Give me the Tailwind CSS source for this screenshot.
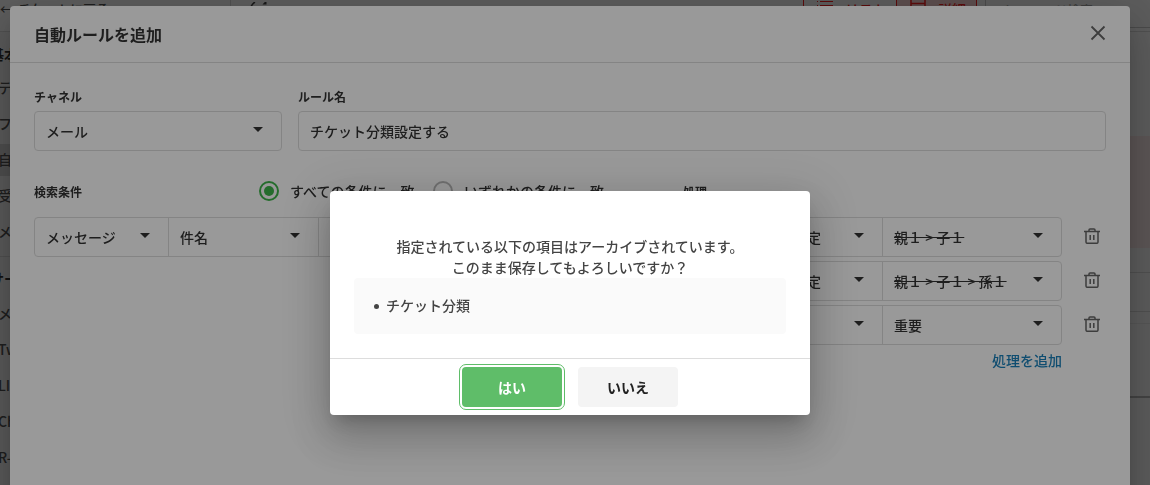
<!DOCTYPE html>
<html lang="ja">
<head>
<meta charset="utf-8">
<title>自動ルールを追加</title>
<script src="https://cdn.jsdelivr.net/npm/@tailwindcss/browser@4"></script>
</head>
<body class="h-screen overflow-hidden bg-white font-['Noto_Sans_CJK_JP',sans-serif] text-sm font-medium text-[#333]">
<svg class="hidden">
  <symbol id="caret" viewBox="0 0 10 5"><path d="M0 0h10L5 5z" fill="#333"/></symbol>
  <symbol id="trash" viewBox="0 0 16 16"><path d="M0 3.500h16M5 3.500V2q0-1 1-1h4q1 0 1 1v1.500M2 3.500v10.500q0 1.300 1.300 1.300h9.400q1.300 0 1.300-1.300V3.500M6.200 7v5M9.800 7v5" fill="none" stroke="currentColor" stroke-width="1.500"/></symbol>
</svg>

<!-- Page behind the dialogs -->
<div class="flex h-full flex-col">
  <header class="flex h-8 shrink-0 items-start border-b border-[#ddd]">
    <a href="#" class="flex h-full w-[231px] items-start overflow-hidden border-r border-[#ddd] text-[13px] leading-[18px] text-[#555]"><span class="w-[18px]">←</span>チケットに戻る</a>
    <button class="ml-4 h-6" aria-label="更新"><svg class="h-5 w-6" viewBox="0 0 24 20" fill="none" stroke="#444" stroke-width="1.500"><path d="M8 0Q3 3 3.500 10a8 8 0 0 0 15 0"/><path d="M15.500 2.500h4V-2z" fill="#444" stroke="none"/></svg></button>
    <div class="ml-auto flex h-7 border-b border-[#ccc] pr-5 leading-[19px]">
      <button class="flex w-[93px] items-start border-l border-[#ff2020] pl-[13px] text-[#ff2020]"><svg class="mr-3 h-4 w-4" viewBox="0 0 16 16" stroke="#ff2020"><path d="M0 1.500h1M3 1.500h13M0 5.500h1M3 5.500h13M0 11.500h1M3 11.500h13"/></svg>リスト</button>
      <button class="flex w-[81px] items-start border-x border-[#ff2020] bg-[#ffd5d5] pl-[13px] text-[#ff2020]"><svg class="mr-3 h-4 w-4" viewBox="0 0 16 16" fill="none" stroke="#ff2020" stroke-width="1.500"><path d="M1 0v14h14V0M1 3.500h14"/></svg>詳細</button>
      <input aria-label="キーワード検索" placeholder="キーワード検索" class="ml-2 h-[19px] w-[145px] border-l border-[#ccc] pl-4 text-[13px] placeholder:text-[#aaa]">
    </div>
  </header>
  <div class="flex min-h-0 grow justify-between">
    <nav class="w-[231px] overflow-hidden bg-[#f7f7f7]">
      <h2 class="-ml-2.5 mt-2 h-8 leading-[28px] font-bold">基本設定</h2>
      <ul class="flex flex-col gap-1 leading-[22px] text-[#555]">
        <li class="h-8 pt-1"><a href="#" class="-ml-0.5">テンプレート</a></li>
        <li class="h-8 pt-1"><a href="#" class="-ml-0.5">フォルダ</a></li>
        <li class="h-8 bg-[#d8d8d8] pt-1"><a href="#" class="-ml-0.5">自動ルール</a></li>
        <li class="h-8 pt-1"><a href="#" class="-ml-0.5">受信設定</a></li>
        <li class="h-8 pt-1"><a href="#" class="-ml-0.5">メンバー</a></li>
      </ul>
      <h2 class="-ml-2.5 mt-2 h-[42px] border-t border-[#ddd] pt-2 leading-[26px] font-bold">サービス</h2>
      <ul class="flex flex-col gap-1 leading-[22px] text-[#555]">
        <li class="h-8 pt-1"><a href="#" class="-ml-0.5">メール</a></li>
        <li class="h-8 pt-1"><a href="#" class="-ml-0.5">Twitter</a></li>
        <li class="h-8 pt-1"><a href="#" class="-ml-0.5">LINE</a></li>
        <li class="h-8 pt-1"><a href="#" class="-ml-0.5">Chat</a></li>
        <li class="h-8 pt-1"><a href="#" class="-ml-0.5">R-Messe</a></li>
      </ul>
    </nav>
    <div class="w-24">
      <div class="h-26"></div>
      <div class="h-28 bg-[#ffecec]"></div>
      <div class="h-[25px] border-b border-[#ddd]"></div>
      <div class="h-[39px] border-b border-[#ddd]"></div>
      <div class="h-3 border-b border-[#eee]"></div>
      <div class="h-[74px] border-b-2 border-[#bbb]"></div>
    </div>
  </div>
</div>

<!-- Rule editor -->
<div class="fixed inset-0 flex overflow-hidden bg-black/40 pt-1.5 pr-5 pl-2.5">
  <section role="dialog" aria-labelledby="rule-title" class="h-[120%] grow rounded-t bg-white shadow-[0_11px_15px_-7px_rgba(0,0,0,0.2),0_24px_38px_3px_rgba(0,0,0,0.14),0_9px_46px_8px_rgba(0,0,0,0.12)]">
    <header class="flex h-[57px] items-center justify-between border-b border-[#ddd] px-6">
      <h1 id="rule-title" class="text-base font-bold">自動ルールを追加</h1>
      <button aria-label="閉じる" class="h-4 w-4"><svg class="-mt-0.5 h-4 w-4" viewBox="0 0 16 16" stroke="#666" stroke-width="1.800"><path d="M1.500 1.500l13 13M14.500 1.500l-13 13"/></svg></button>
    </header>
    <div class="px-6 pt-6">
      <div class="flex gap-4">
        <div class="w-[248px]">
          <label for="channel" class="block h-6 text-xs leading-[20px] font-bold">チャネル</label>
          <div class="relative h-10 rounded border border-[#ddd]">
            <select id="channel" class="h-full w-full appearance-none px-[11px]"><option>メール</option></select>
            <svg class="pointer-events-none absolute top-[15px] right-[18px] h-[5px] w-2.5"><use href="#caret"/></svg>
          </div>
        </div>
        <div class="grow">
          <label for="rulename" class="block h-6 text-xs leading-[20px] font-bold">ルール名</label>
          <input id="rulename" value="チケット分類設定する" class="block h-10 w-full rounded border border-[#ddd] px-[11px]">
        </div>
      </div>
      <div class="mt-6 flex gap-4">
        <div class="grow">
          <div class="flex h-[42px] items-start leading-[32px]">
            <h2 class="w-[225px] text-xs leading-[34px] font-bold">検索条件</h2>
            <label class="flex w-[174px] items-start gap-[11px]"><input type="radio" name="match" checked class="mt-1.5 h-5 w-5 shrink-0 appearance-none rounded-full border-2 border-[#3db54a] bg-[#3db54a] bg-clip-content p-[3px]">すべての条件に一致</label>
            <label class="flex items-start gap-[11px]"><input type="radio" name="match" class="mt-1.5 h-5 w-5 shrink-0 appearance-none rounded-full border-2 border-[#bbb]">いずれかの条件に一致</label>
          </div>
          <div class="flex h-10 rounded border border-[#ddd]">
            <div class="relative w-[134px] border-r border-[#ddd]">
              <select aria-label="対象" class="h-full w-full appearance-none px-[11px]"><option>メッセージ</option></select>
              <svg class="pointer-events-none absolute top-[15px] right-[18px] h-[5px] w-2.5"><use href="#caret"/></svg>
            </div>
            <div class="relative w-[150px] border-r border-[#ddd]">
              <select aria-label="項目" class="h-full w-full appearance-none px-[11px]"><option>件名</option></select>
              <svg class="pointer-events-none absolute top-[15px] right-[18px] h-[5px] w-2.5"><use href="#caret"/></svg>
            </div>
            <input aria-label="値" class="min-w-0 grow px-[11px]">
          </div>
        </div>
        <div class="w-[423px]">
          <h2 class="h-[42px] text-xs leading-[34px] font-bold">処理</h2>
          <div class="flex flex-col gap-1">
            <div class="flex items-center justify-between">
              <div class="flex h-10 w-[379px] rounded border border-[#ddd]">
                <div class="relative w-[199px] border-r border-[#ddd]">
                  <select aria-label="処理1" class="h-full w-full appearance-none px-[11px]"><option>チケット分類を設定</option></select>
                  <svg class="pointer-events-none absolute top-[15px] right-[18px] h-[5px] w-2.5"><use href="#caret"/></svg>
                </div>
                <div class="relative grow">
                  <select aria-label="分類1" class="h-full w-full appearance-none px-[11px] line-through"><option>親１ &gt; 子１</option></select>
                  <svg class="pointer-events-none absolute top-[15px] right-[18px] h-[5px] w-2.5"><use href="#caret"/></svg>
                </div>
              </div>
              <button aria-label="処理1を削除" class="mr-1.5 pb-0.5 text-[#666]"><svg class="h-4 w-4"><use href="#trash"/></svg></button>
            </div>
            <div class="flex items-center justify-between">
              <div class="flex h-10 w-[379px] rounded border border-[#ddd]">
                <div class="relative w-[199px] border-r border-[#ddd]">
                  <select aria-label="処理2" class="h-full w-full appearance-none px-[11px]"><option>チケット分類を設定</option></select>
                  <svg class="pointer-events-none absolute top-[15px] right-[18px] h-[5px] w-2.5"><use href="#caret"/></svg>
                </div>
                <div class="relative grow">
                  <select aria-label="分類2" class="h-full w-full appearance-none px-[11px] line-through"><option>親１ &gt; 子１ &gt; 孫１</option></select>
                  <svg class="pointer-events-none absolute top-[15px] right-[18px] h-[5px] w-2.5"><use href="#caret"/></svg>
                </div>
              </div>
              <button aria-label="処理2を削除" class="mr-1.5 pb-0.5 text-[#666]"><svg class="h-4 w-4"><use href="#trash"/></svg></button>
            </div>
            <div class="flex items-center justify-between">
              <div class="flex h-10 w-[379px] rounded border border-[#ddd]">
                <div class="relative w-[199px] border-r border-[#ddd]">
                  <select aria-label="処理3" class="h-full w-full appearance-none px-[11px]"><option>ラベルを追加</option></select>
                  <svg class="pointer-events-none absolute top-[15px] right-[18px] h-[5px] w-2.5"><use href="#caret"/></svg>
                </div>
                <div class="relative grow">
                  <select aria-label="ラベル" class="h-full w-full appearance-none px-[11px]"><option>重要</option></select>
                  <svg class="pointer-events-none absolute top-[15px] right-[18px] h-[5px] w-2.5"><use href="#caret"/></svg>
                </div>
              </div>
              <button aria-label="処理3を削除" class="mr-1.5 pb-0.5 text-[#666]"><svg class="h-4 w-4"><use href="#trash"/></svg></button>
            </div>
          </div>
          <div class="mt-[5px] w-[379px] text-right"><a href="#" class="text-[#1a80bb]">処理を追加</a></div>
        </div>
      </div>
    </div>
  </section>
</div>

<!-- Confirmation -->
<div class="fixed inset-0 flex items-start justify-center bg-black/40 pt-[191px] pr-2.5">
  <section role="alertdialog" aria-describedby="confirm-text" class="w-[480px] rounded bg-white shadow-[0_11px_15px_-7px_rgba(0,0,0,0.2),0_24px_38px_3px_rgba(0,0,0,0.14),0_9px_46px_8px_rgba(0,0,0,0.12)]">
    <div class="px-6 pt-[45px] pb-6">
      <p id="confirm-text" class="text-center leading-[21px] text-[#444]">指定されている以下の項目はアーカイブされています。<br>このまま保存してもよろしいですか？</p>
      <ul class="flex h-14 items-center rounded bg-[#fafafa] px-5 pb-0.5 text-[#444]">
        <li class="flex items-center gap-[7px]"><span class="mt-0.5 h-[5px] w-[5px] rounded-full bg-[#444]"></span>チケット分類</li>
      </ul>
    </div>
    <footer class="flex justify-center gap-4 border-t border-[#ddd] p-2">
      <button class="h-10 w-[100px] rounded bg-[#5fbd69] font-bold text-white outline outline-offset-2 outline-[#5fbd69]">はい</button>
      <button class="h-10 w-[100px] rounded bg-[#f4f4f4] font-bold text-[#222]">いいえ</button>
    </footer>
  </section>
</div>
</body>
</html>
